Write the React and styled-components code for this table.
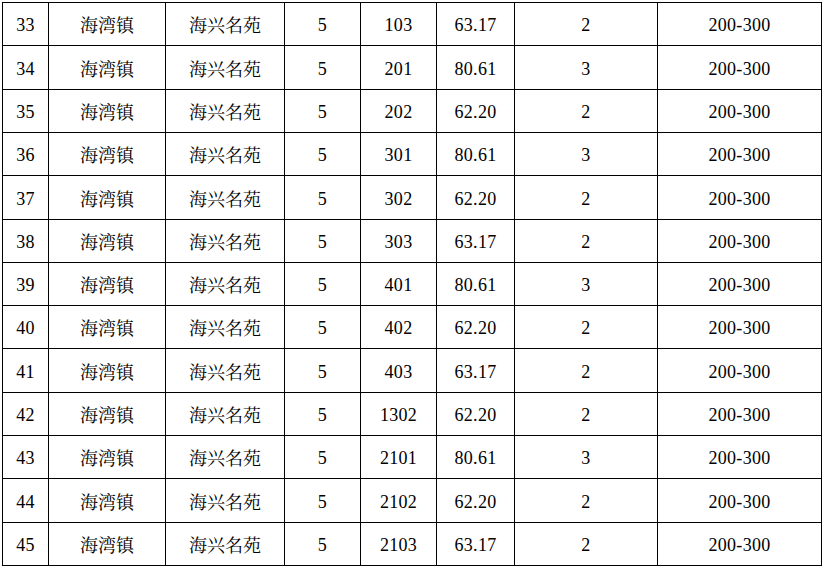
import React from "react";
import styled, { createGlobalStyle } from "styled-components";

const rows = [
  ["33", "103", "63.17", "2"],
  ["34", "201", "80.61", "3"],
  ["35", "202", "62.20", "2"],
  ["36", "301", "80.61", "3"],
  ["37", "302", "62.20", "2"],
  ["38", "303", "63.17", "2"],
  ["39", "401", "80.61", "3"],
  ["40", "402", "62.20", "2"],
  ["41", "403", "63.17", "2"],
  ["42", "1302", "62.20", "2"],
  ["43", "2101", "80.61", "3"],
  ["44", "2102", "62.20", "2"],
  ["45", "2103", "63.17", "2"],
];

// row edges fall on 43.3px steps, so heights alternate 43/44
const rowHeight = (i) => Math.round(43.3 * (i + 1)) - Math.round(43.3 * i);

export default function App() {
  return (
    <>
      <GlobalStyle />
      <Page>
        <Table>
          {rows.map(([no, room, area, beds], i) => (
            <Row key={no} $h={rowHeight(i)}>
              <Cell $num>{no}</Cell>
              <Cell>海湾镇</Cell>
              <Cell>海兴名苑</Cell>
              <Cell $num>5</Cell>
              <Cell $num>{room}</Cell>
              <Cell $num>{area}</Cell>
              <Cell $num>{beds}</Cell>
              <Cell $num>200-300</Cell>
            </Row>
          ))}
        </Table>
      </Page>
    </>
  );
}

const GlobalStyle = createGlobalStyle`
  body {
    margin: 0;
    background: #fff;
  }
`;

const Page = styled.div`
  padding: 2px;
`;

const Table = styled.div`
  display: flex;
  flex-direction: column;
  width: 819px;
  border-top: 1px solid #000;
  border-left: 1px solid #000;
  font-family: "Liberation Serif", "Noto Serif CJK SC", "Noto Sans CJK SC", serif;
  font-size: 18px;
  color: #000;
`;

const Row = styled.div`
  display: grid;
  grid-template-columns: 46px 117px 119px 76px 76px 78px 143px 164px;
  height: ${(p) => p.$h}px;
`;

const Cell = styled.div`
  display: flex;
  align-items: center;
  justify-content: center;
  padding-top: ${(p) => (p.$num ? "3px" : "0")};
  border-right: 1px solid #000;
  border-bottom: 1px solid #000;
  box-sizing: border-box;
  letter-spacing: ${(p) => (p.$num ? "0.3px" : "0")};
`;
